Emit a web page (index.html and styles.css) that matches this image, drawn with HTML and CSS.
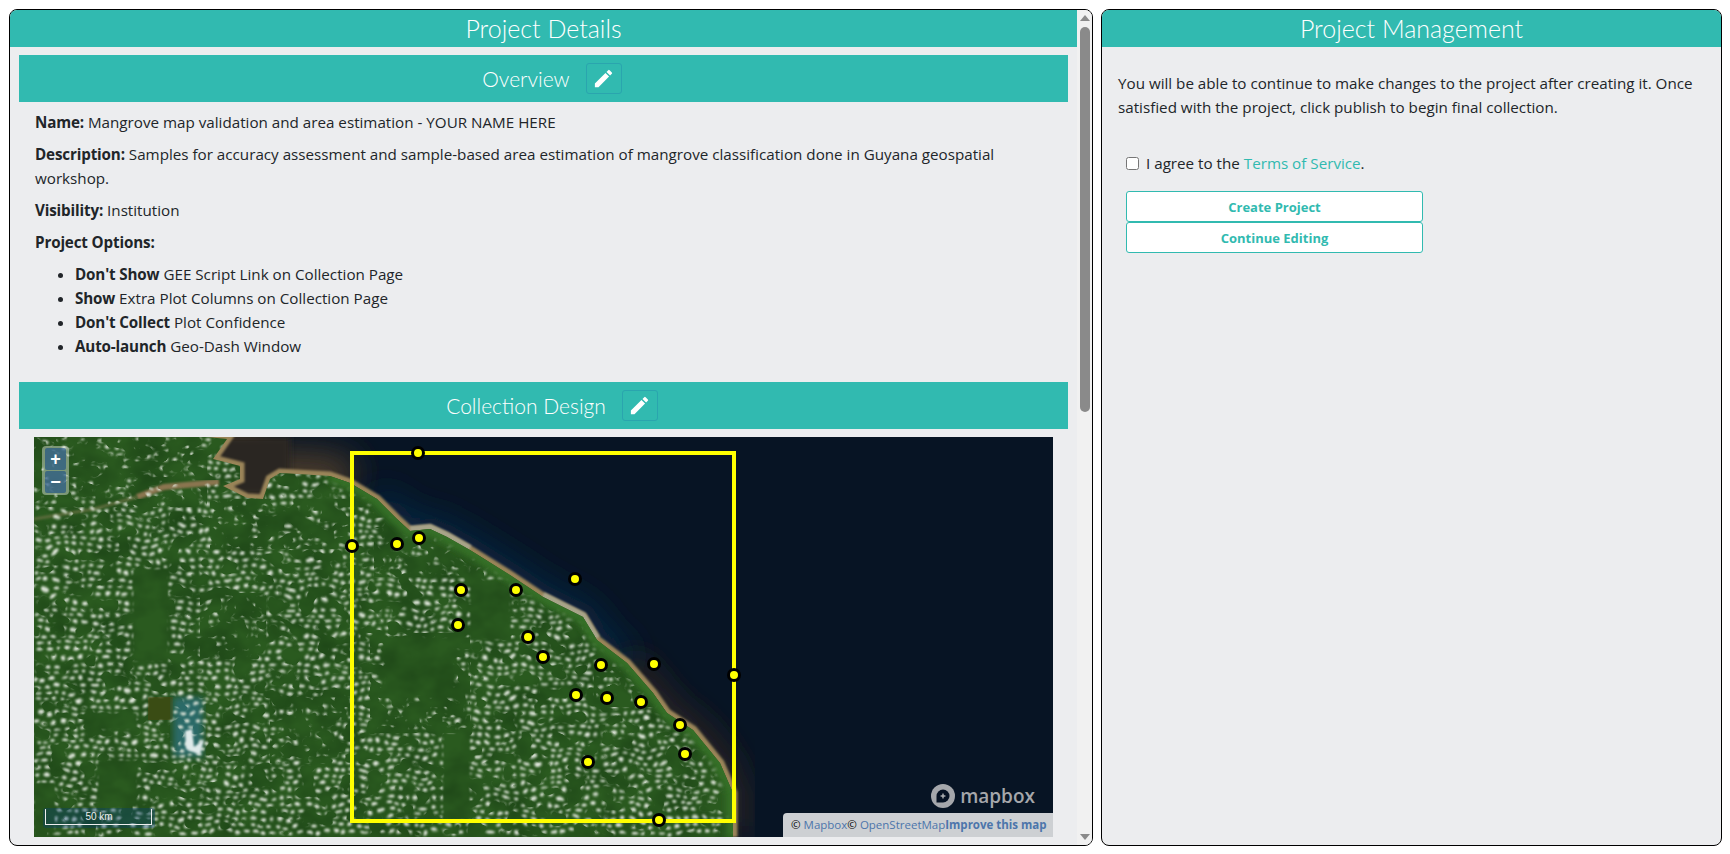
FILE: index.html
```html
<!DOCTYPE html>
<html lang="en">
<head>
    <meta charset="UTF-8">
    <meta name="viewport" content="width=device-width, initial-scale=1.0">
    <title>Project Review</title>
    <link rel="stylesheet" href="styles.css">
</head>
<body>
    <div class="page">
        <div class="card card-details">
            <div class="card-main">
                <h1 class="card-title">Project Details</h1>

                <div class="section-header">
                    <h2>Overview</h2>
                    <button class="edit-button" type="button">
                        <svg viewBox="0 0 24 24"><path d="M3 17.25V21h3.75L17.81 9.94l-3.75-3.75L3 17.25zM20.71 7.04a1 1 0 0 0 0-1.41l-2.34-2.34a1 1 0 0 0-1.41 0l-1.83 1.83 3.75 3.75 1.83-1.83z"/></svg>
                    </button>
                </div>

                <div class="overview">
                    <p><b>Name:</b> Mangrove map validation and area estimation - YOUR NAME HERE</p>
                    <p><b>Description:</b> Samples for accuracy assessment and sample-based area estimation of mangrove classification done in Guyana geospatial workshop.</p>
                    <p><b>Visibility:</b> Institution</p>
                    <p><b>Project Options:</b></p>
                    <ul>
                        <li><b>Don't Show</b> GEE Script Link on Collection Page</li>
                        <li><b>Show</b> Extra Plot Columns on Collection Page</li>
                        <li><b>Don't Collect</b> Plot Confidence</li>
                        <li><b>Auto-launch</b> Geo-Dash Window</li>
                    </ul>
                </div>

                <div class="section-header">
                    <h2>Collection Design</h2>
                    <button class="edit-button" type="button">
                        <svg viewBox="0 0 24 24"><path d="M3 17.25V21h3.75L17.81 9.94l-3.75-3.75L3 17.25zM20.71 7.04a1 1 0 0 0 0-1.41l-2.34-2.34a1 1 0 0 0-1.41 0l-1.83 1.83 3.75 3.75 1.83-1.83z"/></svg>
                    </button>
                </div>

                <div class="map">
                    <svg class="map-image" viewBox="0 0 1019 400">
                        <defs>
                            <pattern id="cloud-tile" width="27" height="21" patternUnits="userSpaceOnUse">
                                <ellipse cx="4" cy="3" rx="2.7" ry="1.6"/>
                                <ellipse cx="13" cy="4" rx="3.1" ry="1.7"/>
                                <ellipse cx="22" cy="3" rx="2.3" ry="1.5"/>
                                <ellipse cx="3" cy="10" rx="2.3" ry="1.7"/>
                                <ellipse cx="10" cy="11" rx="2.9" ry="1.6"/>
                                <ellipse cx="19" cy="10" rx="2.7" ry="1.9"/>
                                <ellipse cx="6" cy="17" rx="3.1" ry="1.6"/>
                                <ellipse cx="14" cy="18" rx="2.5" ry="1.7"/>
                                <ellipse cx="23" cy="17" rx="2.9" ry="1.6"/>
                            </pattern>
                            <filter id="clouds" x="0" y="0" width="100%" height="100%" color-interpolation-filters="sRGB">
                                <feTurbulence type="fractalNoise" baseFrequency="0.04 0.05" numOctaves="1" seed="7" result="noise"/>
                                <feDisplacementMap in="SourceGraphic" in2="noise" scale="14" xChannelSelector="R" yChannelSelector="G"/>
                                <feGaussianBlur stdDeviation="0.8"/>
                            </filter>
                            <filter id="holes" x="0" y="0" width="100%" height="100%" color-interpolation-filters="sRGB">
                                <feTurbulence type="fractalNoise" baseFrequency="0.06 0.08" numOctaves="2" seed="3"/>
                                <feColorMatrix values="0 0 0 0 0  0 0 0 0 0  0 0 0 0 0  14 0 0 0 -7.4"/>
                            </filter>
                            <filter id="sparse" x="0" y="0" width="100%" height="100%" color-interpolation-filters="sRGB">
                                <feTurbulence type="fractalNoise" baseFrequency="0.08 0.1" numOctaves="2" seed="21"/>
                                <feColorMatrix values="0 0 0 0 0  0 0 0 0 0  0 0 0 0 0  14 0 0 0 -6"/>
                                <feComposite in2="SourceGraphic" operator="in"/>
                            </filter>
                            <filter id="shade" x="0" y="0" width="100%" height="100%" color-interpolation-filters="sRGB">
                                <feTurbulence type="fractalNoise" baseFrequency="0.03 0.04" numOctaves="3" seed="4"/>
                                <feColorMatrix values="0 0 0 0 0.1  0 0 0 0 0.25  0 0 0 0 0.08  1.2 0 0 0 -0.35"/>
                            </filter>
                            <filter id="blur1"><feGaussianBlur stdDeviation="1"/></filter>
                            <filter id="blur3"><feGaussianBlur stdDeviation="3"/></filter>
                            <filter id="blur16" x="-20%" y="-20%" width="140%" height="140%"><feGaussianBlur stdDeviation="16"/></filter>
                            <clipPath id="land">
                                <path d="M0 0L173 0L193 2L179 22L206 29L206 42L189 49L213 61L229 62L236 42L246 36L296 39L316 46L343 62L363 82L376 94L396 92L413 100L436 113L476 138L509 160L549 180L563 203L593 226L619 256L633 276L659 293L686 326L699 356L699 400L0 400Z"/>
                            </clipPath>
                            <mask id="cloud-cover" maskUnits="userSpaceOnUse" x="0" y="0" width="1019" height="400">
                                <rect width="1019" height="400" fill="#fff"/>
                                <rect width="1019" height="400" filter="url(#holes)"/>
                                <g filter="url(#blur1)">
                                    <rect x="99" y="132" width="35" height="93"/>
                                    <rect x="63" y="276" width="40" height="17"/>
                                    <rect x="64" y="323" width="39" height="47"/>
                                    <rect x="0" y="346" width="21" height="50"/>
                                    <rect x="114" y="260" width="25" height="23"/>
                                    <rect x="436" y="143" width="40" height="60"/>
                                    <rect x="409" y="296" width="27" height="87"/>
                                    <rect x="350" y="200" width="70" height="60"/>
                                </g>
                                <g filter="url(#sparse)">
                                    <rect x="336" y="196" width="100" height="100"/>
                                    <rect x="236" y="253" width="80" height="73"/>
                                    <rect x="166" y="156" width="66" height="66"/>
                                    <rect x="0" y="0" width="173" height="70"/>
                                    <rect x="176" y="62" width="140" height="50"/>
                                    <rect x="340" y="90" width="110" height="50"/>
                                    <rect x="560" y="230" width="90" height="40"/>
                                </g>
                                <path d="M296 39L316 46L343 62L363 82L376 94L396 92L413 100L436 113L476 138L509 160L549 180L563 203L593 226L619 256L633 276L659 293L686 326L699 356L699 400" fill="none" stroke="#000" stroke-width="18" filter="url(#blur3)"/>
                            </mask>
                        </defs>

                        <!-- sea -->
                        <rect width="1019" height="400" fill="#071424"/>
                        <path d="M173 0L193 2L179 22L206 29L206 42L189 49L213 61L229 62L236 42L246 36L296 39L316 46" fill="none" stroke="#4a3a2c" stroke-width="46" filter="url(#blur16)"/>
                        <rect x="166" y="0" width="90" height="58" fill="#2b2522" filter="url(#blur3)"/>
                        <path d="M343 62L363 82L376 94L396 92L413 100L436 113L476 138L509 160L549 180L563 203L593 226" fill="none" stroke="#0b2c46" stroke-width="26" filter="url(#blur16)"/>
                        <path d="M593 226L619 256L633 276L659 293L686 326L699 356L699 400" fill="none" stroke="#3a2b24" stroke-width="20" filter="url(#blur16)"/>

                        <!-- beach and land -->
                        <path d="M173 0L193 2L179 22L206 29L206 42L189 49L213 61L229 62L236 42L246 36L296 39L316 46L343 62L363 82L376 94L396 92L413 100L436 113L476 138L509 160L549 180L563 203L593 226L619 256L633 276L659 293L686 326L699 356L699 400" fill="none" stroke="#9a8458" stroke-width="9" filter="url(#blur1)"/>
                        <path d="M376 92L396 90L413 98L436 111M509 158L549 178L563 201" fill="none" stroke="#a8a48a" stroke-width="6" filter="url(#blur1)"/>
                        <g clip-path="url(#land)">
                            <rect width="1019" height="400" fill="#2a5a1f"/>
                            <rect width="1019" height="400" filter="url(#shade)"/>
                            <path d="M296 39L316 46L343 62L363 82L376 94L396 92L413 100L436 113L476 138L509 160L549 180L563 203L593 226L619 256L633 276L659 293L686 326L699 356L699 400" fill="none" stroke="#347026" stroke-width="14" filter="url(#blur3)"/>
                            <path d="M103 60L130 50L185 45" fill="none" stroke="#8a7550" stroke-width="6" filter="url(#blur1)"/>
                            <path d="M0 82L60 72L103 60" fill="none" stroke="#5a6a3a" stroke-width="3" filter="url(#blur1)"/>
                            <rect x="114" y="260" width="25" height="23" fill="#3a4c14"/>
                            <rect x="139" y="260" width="30" height="60" fill="#2a6a68" filter="url(#blur3)"/>
                            <g mask="url(#cloud-cover)">
                                <rect class="cloud-layer" width="1019" height="400" filter="url(#clouds)"/>
                            </g>
                            <path d="M151 294L158 292L160 310L170 302L166 318L152 312Z" fill="#dfeaea" filter="url(#blur1)"/>
                        </g>

                        <!-- project boundary and plots -->
                        <rect x="318" y="16" width="382" height="368" fill="none" stroke="#ffff00" stroke-width="4"/>
                        <g class="plots">
                            <circle cx="384" cy="16" r="5.5"/>
                            <circle cx="318" cy="109" r="5.5"/>
                            <circle cx="363" cy="107" r="5.5"/>
                            <circle cx="385" cy="101" r="5.5"/>
                            <circle cx="427" cy="153" r="5.5"/>
                            <circle cx="482" cy="153" r="5.5"/>
                            <circle cx="424" cy="188" r="5.5"/>
                            <circle cx="541" cy="142" r="5.5"/>
                            <circle cx="494" cy="200" r="5.5"/>
                            <circle cx="509" cy="220" r="5.5"/>
                            <circle cx="567" cy="228" r="5.5"/>
                            <circle cx="620" cy="227" r="5.5"/>
                            <circle cx="700" cy="238" r="5.5"/>
                            <circle cx="542" cy="258" r="5.5"/>
                            <circle cx="573" cy="261" r="5.5"/>
                            <circle cx="607" cy="265" r="5.5"/>
                            <circle cx="646" cy="288" r="5.5"/>
                            <circle cx="651" cy="317" r="5.5"/>
                            <circle cx="554" cy="325" r="5.5"/>
                            <circle cx="625" cy="383" r="5.5"/>
                        </g>
                    </svg>

                    <div class="zoom-control">
                        <button class="zoom-button" type="button">+</button>
                        <button class="zoom-button" type="button">&minus;</button>
                    </div>

                    <div class="scale-bar">50 km</div>

                    <div class="map-logo">
                        <svg viewBox="0 0 24 24">
                            <circle cx="12" cy="12" r="12" fill="#a5a7ab"/>
                            <path d="M12 5.5a6.5 6.5 0 0 1 0 13H5.5V12A6.5 6.5 0 0 1 12 5.5z" fill="#061223"/>
                            <path d="M12 8.8l1 2.2 2.2 1-2.2 1-1 2.2-1-2.2-2.2-1 2.2-1z" fill="#a5a7ab"/>
                        </svg>
                        <span>mapbox</span>
                    </div>

                    <div class="attribution">
                        <span>© <a href="#">Mapbox</a></span><span>© <a href="#">OpenStreetMap</a></span><a href="#" class="improve">Improve this map</a>
                    </div>
                </div>
            </div>

            <div class="scrollbar">
                <div class="arrow-up"></div>
                <div class="thumb"></div>
                <div class="arrow-down"></div>
            </div>
        </div>

        <div class="card card-manage">
            <h1 class="card-title">Project Management</h1>
            <div class="manage-body">
                <p>You will be able to continue to make changes to the project after creating it. Once satisfied with the project, click publish to begin final collection.</p>
                <div class="agree">
                    <input type="checkbox" id="agree">
                    <label for="agree">I agree to the <a href="#">Terms of Service</a>.</label>
                </div>
                <button class="outline-button" type="button">Create Project</button>
                <button class="outline-button" type="button">Continue Editing</button>
            </div>
        </div>
    </div>
</body>
</html>
```

FILE: styles.css
```css
* {
    box-sizing: border-box;
}

html, body {
    height: 100%;
}

body {
    margin: 0;
    background-color: #fff;
    color: #212529;
    font-family: "Open Sans", Arial, sans-serif;
    font-size: 15.2px;
    line-height: 24px;
    overflow: hidden;
}

b {
    letter-spacing: -0.15px;
}

a {
    color: #31bab0;
    text-decoration: none;
}

.page {
    display: grid;
    grid-template-columns: 1084px 621px;
    gap: 8px;
    height: 100%;
    padding: 9px 8px 8px 9px;
}

.card {
    background-color: #ecedef;
    border: 1px solid #000;
    border-radius: 8px;
    overflow: hidden;
}

.card-details {
    display: flex;
}

.card-main {
    flex: 1;
    min-width: 0;
}

.card-title {
    margin: 0;
    height: 37px;
    background-color: #31bab0;
    color: #fff;
    font-family: Lato, sans-serif;
    font-size: 25px;
    font-weight: 300;
    line-height: 36px;
    text-align: center;
}

.section-header {
    display: flex;
    align-items: center;
    justify-content: center;
    gap: 16px;
    height: 47px;
    margin: 8px 9px;
    padding-left: 17px;
    background-color: #31bab0;
    color: #fff;
}

.section-header h2 {
    margin: 0;
    font-family: Lato, sans-serif;
    font-size: 21px;
    font-weight: 300;
}

.edit-button {
    display: flex;
    align-items: center;
    justify-content: center;
    width: 36px;
    height: 31px;
    padding: 0;
    background-color: #31bab0;
    border: 1px solid #2aa5ae;
    border-radius: 3px;
}

.edit-button svg {
    width: 23px;
    height: 23px;
    fill: #fff;
}

.overview {
    padding: 0 25px;
}

.overview p {
    margin: 0 0 8px;
}

.overview ul {
    margin: 0 0 24px;
    padding-left: 40px;
}

.map {
    position: relative;
    height: 400px;
    margin: 0 24px;
    overflow: hidden;
}

.map-image {
    display: block;
    width: 100%;
    height: 100%;
}

#cloud-tile ellipse {
    fill: #dfe6da;
}

.cloud-layer {
    fill: url(#cloud-tile);
}

.plots circle {
    fill: #ffff00;
    stroke: #000;
    stroke-width: 3;
}

.zoom-control {
    position: absolute;
    top: 9px;
    left: 8px;
    display: flex;
    flex-direction: column;
    gap: 1px;
    padding: 2px 3px;
    background-color: rgba(255, 255, 255, 0.4);
    border-radius: 4px;
}

.zoom-button {
    width: 21px;
    height: 22px;
    padding: 0;
    background-color: rgba(0, 60, 136, 0.5);
    border: none;
    border-radius: 2px;
    color: #fff;
    font-family: "Liberation Sans", sans-serif;
    font-size: 18px;
    font-weight: bold;
    line-height: 20px;
}

.scale-bar {
    position: absolute;
    left: 9px;
    bottom: 9px;
    width: 112px;
    height: 20px;
    padding-top: 2px;
    background-color: rgba(0, 60, 136, 0.3);
    border-radius: 3px;
    color: #eee;
    font-family: "Liberation Sans", sans-serif;
    font-size: 10px;
    line-height: 14px;
    text-align: center;
}

.scale-bar::after {
    content: "";
    position: absolute;
    left: 2px;
    right: 3px;
    bottom: 3px;
    height: 15px;
    border: 1px solid #eee;
    border-top: none;
}

.map-logo {
    position: absolute;
    right: 18px;
    bottom: 29px;
    display: flex;
    align-items: center;
    gap: 5px;
    color: #a5a7ab;
    font-family: "Open Sans", sans-serif;
    font-size: 19px;
    font-weight: 600;
    line-height: 24px;
}

.map-logo svg {
    width: 24px;
    height: 24px;
}

.attribution {
    position: absolute;
    right: 0;
    bottom: 0;
    width: 270px;
    height: 24px;
    padding: 0 8px;
    background-color: rgba(255, 255, 255, 0.8);
    border-top-left-radius: 4px;
    color: #000;
    font-family: "Open Sans", sans-serif;
    font-size: 11.5px;
    line-height: 24px;
    text-align: right;
    white-space: nowrap;
}

.attribution a {
    color: #4c75ab;
}

.attribution .improve {
    font-weight: bold;
}

.scrollbar {
    display: flex;
    flex-direction: column;
    align-items: center;
    flex: none;
    width: 15px;
    padding: 5px 0;
    background-color: #f1f1f1;
}

.arrow-up, .arrow-down {
    flex: none;
    width: 0;
    height: 0;
    border-left: 5px solid transparent;
    border-right: 5px solid transparent;
}

.arrow-up {
    border-bottom: 6px solid #8a8a8a;
}

.arrow-down {
    margin-top: auto;
    border-top: 6px solid #8a8a8a;
}

.thumb {
    width: 10px;
    height: 385px;
    margin-top: 6px;
    background-color: #8a8a8a;
    border-radius: 5px;
}

.manage-body {
    padding: 24px 16px 0;
}

.manage-body p {
    margin: 0 0 32px;
}

.agree {
    display: flex;
    align-items: center;
    gap: 7px;
    margin: 0 0 16px 8px;
}

.agree input {
    width: 13px;
    height: 13px;
    margin: 0;
}

.outline-button {
    display: block;
    width: 297px;
    height: 31px;
    margin-left: 8px;
    padding: 0;
    background-color: #fff;
    border: 1px solid #31bab0;
    border-radius: 3px;
    color: #31bab0;
    font-family: "Open Sans", sans-serif;
    font-size: 13px;
    font-weight: bold;
}
```
